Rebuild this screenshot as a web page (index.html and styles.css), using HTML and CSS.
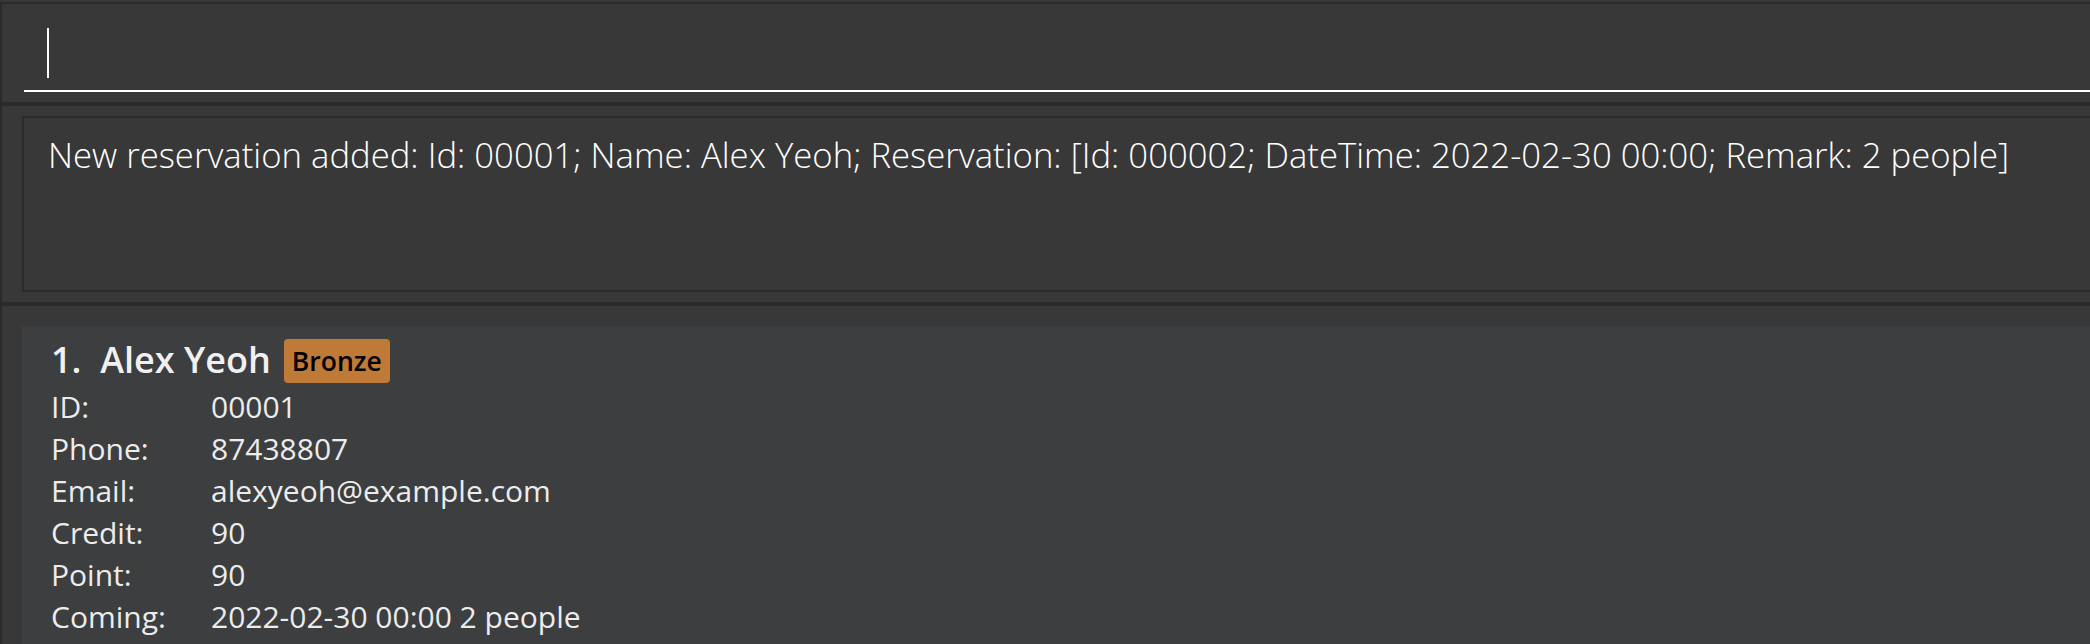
FILE: index.html
```html
<!DOCTYPE html>
<html>
<head>
<meta charset="utf-8">
<link rel="stylesheet" href="styles.css">
</head>
<body>
<div class="window">
  <section class="command-pane">
    <div class="command-field"><span class="caret"></span></div>
  </section>
  <section class="result-pane">
    <div class="result-box">New reservation added: Id: 00001; Name: Alex Yeoh; Reservation: [Id: 000002; DateTime: 2022-02-30 00:00; Remark: 2 people]</div>
  </section>
  <section class="list-pane">
    <div class="card">
      <div class="card-title">
        <span class="name">1.&nbsp; Alex Yeoh</span>
        <span class="tier">Bronze</span>
      </div>
      <div class="fields">
        <span class="label">ID:</span><span class="value">00001</span>
        <span class="label">Phone:</span><span class="value">87438807</span>
        <span class="label">Email:</span><span class="value">alexyeoh@example.com</span>
        <span class="label">Credit:</span><span class="value">90</span>
        <span class="label">Point:</span><span class="value">90</span>
        <span class="label">Coming:</span><span class="value">2022-02-30 00:00 2 people</span>
      </div>
    </div>
  </section>
</div>
</body>
</html>
```

FILE: styles.css
```css
html, body {
  margin: 0;
  padding: 0;
  height: 644px;
  overflow: hidden;
  background: #383838;
}

.window {
  padding-top: 2px;
  font-family: "Open Sans", "Noto Sans", sans-serif;
  color: #ffffff;
}

.command-pane {
  border-top: 2px solid #2a2a2a;
  border-left: 2px solid #2a2a2a;
  border-bottom: 2px solid #2a2a2a;
  height: 98px;
}

.command-field {
  margin: 10px 0 0 22px;
  height: 78px;
  box-sizing: border-box;
  border-bottom: 2px solid #ffffff;
  padding: 14px 0 0 23px;
  display: flex;
  align-items: flex-start;
}

.caret {
  width: 2px;
  height: 50px;
  background: #ffffff;
}

.result-pane {
  border-top: 2px solid #2a2a2a;
  border-left: 2px solid #2a2a2a;
  border-bottom: 2px solid #2a2a2a;
  padding: 10px 0 10px 20px;
}

.result-box {
  border: 2px solid #2a2a2a;
  margin-right: -20px;
  box-sizing: content-box;
  padding: 13px 0 0 24px;
  height: 159px;
  font-size: 34.7px;
  font-weight: 300;
  line-height: normal;
  white-space: nowrap;
  color: #ffffff;
}

.list-pane {
  border-top: 2px solid #2a2a2a;
  border-left: 2px solid #2a2a2a;
  padding: 20px 0 0 20px;
  height: 400px;
}

.card {
  background: #3c3e40;
  margin-right: -20px;
  height: 400px;
  padding: 13px 0 0 29px;
}

.card-title {
  display: flex;
  align-items: center;
  height: 44px;
  gap: 13px;
}

.name {
  font-size: 36px;
  font-weight: 600;
  line-height: 44px;
  color: #f0f0f0;
  margin-top: -3px;
}

.tier {
  background: #c07a37;
  color: #000000;
  font-size: 26.5px;
  font-weight: 600;
  line-height: 44px;
  height: 44px;
  padding: 0 8px;
  border-radius: 4px;
}

.fields {
  display: grid;
  grid-template-columns: 160px auto;
  margin-top: 3px;
  font-size: 30px;
  line-height: 42px;
  color: #ececec;
}

.label, .value {
  white-space: nowrap;
}
```
